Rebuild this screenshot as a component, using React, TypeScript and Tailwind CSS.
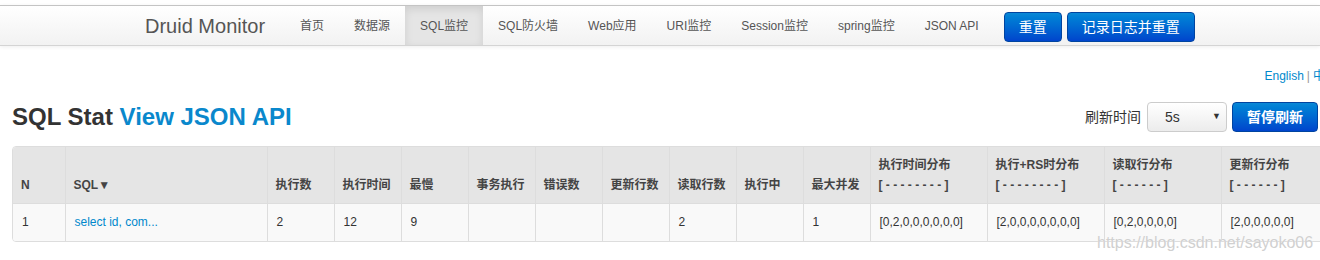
import React from 'react';

const font = { fontFamily: '"Liberation Sans", Arial, "Noto Sans CJK SC", sans-serif' };

const navItems = ['首页', '数据源', 'SQL监控', 'SQL防火墙', 'Web应用', 'URI监控', 'Session监控', 'spring监控', 'JSON API'];

type Col = { title: string; sub?: string; width: string };

const columns: Col[] = [
  { title: 'N', width: 'w-[52px]' },
  { title: 'SQL▼', width: 'w-[202px]' },
  { title: '执行数', width: 'w-[67px]' },
  { title: '执行时间', width: 'w-[67px]' },
  { title: '最慢', width: 'w-[67px]' },
  { title: '事务执行', width: 'w-[67px]' },
  { title: '错误数', width: 'w-[67px]' },
  { title: '更新行数', width: 'w-[67px]' },
  { title: '读取行数', width: 'w-[67px]' },
  { title: '执行中', width: 'w-[67px]' },
  { title: '最大并发', width: 'w-[67px]' },
  { title: '执行时间分布', sub: '[ - - - - - - - - ]', width: 'w-[117px]' },
  { title: '执行+RS时分布', sub: '[ - - - - - - - - ]', width: 'w-[117px]' },
  { title: '读取行分布', sub: '[ - - - - - - ]', width: 'w-[117px]' },
  { title: '更新行分布', sub: '[ - - - - - - ]', width: 'w-[117px]' },
];

const row = ['1', 'select id, com...', '2', '12', '9', '', '', '', '2', '', '1', '[0,2,0,0,0,0,0,0]', '[2,0,0,0,0,0,0,0]', '[0,2,0,0,0,0]', '[2,0,0,0,0,0]'];

const blueBtn =
  'border border-[#0044a0] rounded-[4px] bg-gradient-to-b from-[#0a88d6] to-[#0044cc] text-white text-[14px] px-[14px] flex items-center';

export default function App() {
  return (
    <div className="relative w-[1320px] h-[260px] overflow-hidden bg-white text-[#333]" style={font}>
      {/* navbar */}
      <div className="mt-[5px] h-[41px] border-t border-b border-t-[#c4c4c4] border-b-[#d4d4d4] bg-gradient-to-b from-white to-[#f2f2f2] shadow-[0_1px_4px_rgba(0,0,0,0.07)] flex">
        <div className="pl-[130px] flex h-[39px]">
          <div className="px-[15px] pr-[20px] flex items-center text-[20px] text-[#555]">Druid Monitor</div>
          {navItems.map((n) => (
            <div
              key={n}
              className={`px-[15px] flex items-center text-[12px] text-[#555] ${
                n === 'SQL监控' ? 'bg-[#e5e5e5] shadow-[inset_0_3px_8px_rgba(0,0,0,0.1)]' : ''
              }`}
            >
              {n}
            </div>
          ))}
          <div className="ml-[10px] flex gap-[5px] pt-[6px] pb-[3px]">
            <div className={blueBtn}>重置</div>
            <div className={blueBtn}>记录日志并重置</div>
          </div>
        </div>
      </div>

      {/* content */}
      <div className="w-[1337px] pl-[12px]">
        <div className="flex justify-end pt-[22px] text-[12px] leading-[16px]">
          <span className="text-[#0088cc]">English</span>
          <span className="px-[3px] text-[#999]">|</span>
          <span className="text-[#0088cc]">中文</span>
        </div>

        <div className="flex items-center justify-between mt-[18px] h-[30px] pr-[19px]">
          <div className="text-[24px] font-bold leading-[30px]">
            SQL Stat <span className="text-[#0a88cc]">View JSON API</span>
          </div>
          <div className="flex items-center h-[30px]">
            <span className="text-[14px] mr-[6px]">刷新时间</span>
            <div className="w-[80px] h-[30px] border border-[#ccc] rounded-[4px] bg-gradient-to-b from-white to-[#ececec] flex items-center justify-between pl-[17px] pr-[5px] text-[14px]">
              <span>5s</span>
              <span className="text-[9px] text-[#333]">▼</span>
            </div>
            <div className={`${blueBtn} ml-[5px] h-[30px] font-bold`}>暂停刷新</div>
          </div>
        </div>

        <div className="mt-[14px] border border-[#ddd] rounded-[4px] overflow-hidden w-[1325px]">
          <table className="table-fixed w-full border-collapse text-[12px] leading-[20px]">
            <colgroup>
              {columns.map((c, i) => (
                <col key={i} className={c.width} />
              ))}
            </colgroup>
            <thead>
              <tr className="bg-[#e5e5e5]">
                {columns.map((c, i) => (
                  <th
                    key={i}
                    className={`align-bottom text-left font-bold text-[#444] p-[8px] pr-[4px] whitespace-nowrap ${
                      i > 0 ? 'border-l border-[#ddd]' : ''
                    }`}
                  >
                    <div>{c.title}</div>
                    {c.sub && <div>{c.sub}</div>}
                  </th>
                ))}
              </tr>
            </thead>
            <tbody>
              <tr className="bg-[#f9f9f9]">
                {row.map((v, i) => (
                  <td
                    key={i}
                    className={`p-[8px] pl-[9px] h-[37px] border-t border-[#ddd] whitespace-nowrap ${
                      i > 0 ? 'border-l' : ''
                    } ${i === 1 ? 'text-[#0088cc]' : ''}`}
                  >
                    {v}
                  </td>
                ))}
              </tr>
            </tbody>
          </table>
        </div>
      </div>

      <div className="absolute left-[1097px] top-[231px] text-[16px] text-[#d0d0d0] [text-shadow:0_0_1px_#fff]">
        https://blog.csdn.net/sayoko06
      </div>
    </div>
  );
}
